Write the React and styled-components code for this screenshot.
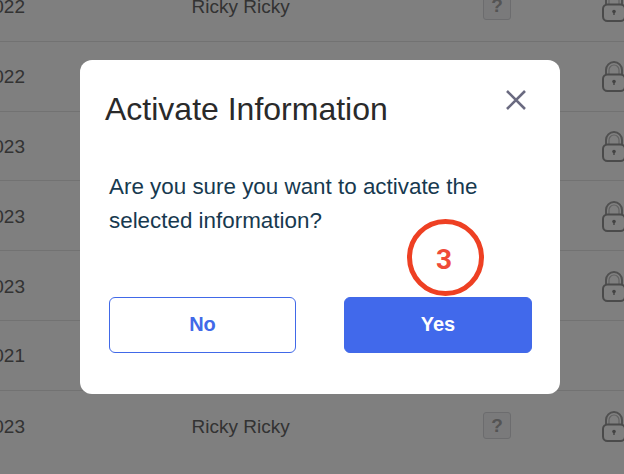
import React from "react";
import styled, { createGlobalStyle } from "styled-components";

const Global = createGlobalStyle`
  html, body { margin: 0; padding: 0; width: 624px; height: 474px; overflow: hidden; background: #fff; }
  body { font-family: "Liberation Sans", Arial, sans-serif; }
`;

const Page = styled.div`
  position: relative;
  width: 624px;
  height: 474px;
  overflow: hidden;
`;

const Table = styled.div`
  display: flex;
  flex-direction: column;
  margin-top: -28px;
`;

const Row = styled.div`
  display: grid;
  grid-template-columns: 192px 291px 119px 22px;
  align-items: center;
  height: 69.8px;
  box-sizing: border-box;
  border-bottom: 1px solid #e4e4e4;
  font-size: 19px;
  color: #666;
  &:last-child {
    border-bottom: none;
  }
`;

const DateCell = styled.div`
  display: flex;
  justify-content: flex-end;
  width: 25px;
  padding-top: 2px;
  white-space: nowrap;
`;

const NameCell = styled.div`
  margin-left: -0.5px;
  padding-top: 2px;
  white-space: nowrap;
`;

const HelpBadge = styled.div`
  width: 28px;
  height: 27px;
  box-sizing: border-box;
  border: 1.5px solid #d8d9dd;
  border-radius: 3px;
  background: #f4f4f6;
  color: #a8a8a8;
  font-size: 19px;
  font-weight: 700;
  display: flex;
  align-items: center;
  justify-content: center;
`;

const LockSvg = styled.svg`
  display: block;
  width: 24px;
  height: 32px;
  overflow: visible;
`;

const Overlay = styled.div`
  position: absolute;
  inset: 0;
  background: rgba(0, 0, 0, 0.5);
  box-sizing: border-box;
  padding: 60px 0 0 80px;
`;

const Modal = styled.div`
  width: 480px;
  height: 334px;
  box-sizing: border-box;
  background: #fff;
  border-radius: 12px;
  padding: 29px 28px 41px 29px;
  display: flex;
  flex-direction: column;
`;

const Header = styled.div`
  display: flex;
  align-items: center;
  justify-content: space-between;
  height: 40px;
`;

const Title = styled.h2`
  margin: 0 0 0 -4px;
  font-size: 32px;
  font-weight: 400;
  line-height: 40px;
  color: #2a2a2a;
`;

const Close = styled.svg`
  display: block;
  width: 22px;
  height: 20px;
  margin: -19px 5px 0 0;
`;

const Message = styled.p`
  margin: 41px 0 0;
  font-size: 22.4px;
  line-height: 34px;
  color: #17394f;
  white-space: nowrap;
`;

const Actions = styled.div`
  display: grid;
  grid-template-columns: 187px 188px;
  gap: 48px;
  margin-top: 59px;
`;

const Button = styled.button`
  height: 56px;
  box-sizing: border-box;
  border-radius: 6px;
  border: 1px solid #4169e8;
  background: ${(p) => (p.$primary ? "#4169eb" : "#fff")};
  color: ${(p) => (p.$primary ? "#fff" : "#4169e8")};
  font-family: inherit;
  font-size: 20px;
  font-weight: 700;
  padding: 0 0 2px;
`;

const Marker = styled.div`
  position: absolute;
  left: 406.5px;
  top: 218.5px;
  width: 77px;
  height: 77px;
  box-sizing: border-box;
  border: 5px solid #ee4023;
  border-radius: 50%;
  display: flex;
  align-items: center;
  justify-content: center;
  color: #ef4b38;
  font-family: Roboto, sans-serif;
  font-size: 28px;
  font-weight: 700;
  padding: 4px 2px 0 0;
`;

const Lock = () => (
  <LockSvg viewBox="0 0 24 32" fill="none">
    <path d="M4 15V10a8 8 0 0 1 16 0v5" stroke="#a0a0a0" strokeWidth="2" />
    <path d="M7 15V10a5 5 0 0 1 10 0v5" stroke="#c4c4c4" strokeWidth="1.2" />
    <rect x="1" y="14.5" width="22" height="16.5" rx="4.5" stroke="#949494" strokeWidth="2" />
    <circle cx="12" cy="21.5" r="1.8" fill="#888" />
    <path d="M12 22v3" stroke="#888" strokeWidth="1.4" />
  </LockSvg>
);

const rows = [
  { date: "2022", name: "Ricky Ricky", help: true, lock: true },
  { date: "2022", lock: true },
  { date: "2023", lock: true },
  { date: "2023", lock: true },
  { date: "2023", lock: true },
  { date: "2021" },
  { date: "2023", name: "Ricky Ricky", help: true, lock: true },
];

export default function App() {
  return (
    <Page>
      <Global />
      <Table>
        {rows.map((r, i) => (
          <Row key={i}>
            <DateCell>{r.date}</DateCell>
            <NameCell>{r.name}</NameCell>
            <div>{r.help && <HelpBadge>?</HelpBadge>}</div>
            <div>{r.lock && <Lock />}</div>
          </Row>
        ))}
      </Table>
      <Overlay>
        <Modal>
          <Header>
            <Title>Activate Information</Title>
            <Close viewBox="0 0 22 20" fill="none">
              <path d="M2 1l18 18M20 1L2 19" stroke="#6a6a80" strokeWidth="2.6" />
            </Close>
          </Header>
          <Message>
            Are you sure you want to activate the
            <br />
            selected information?
          </Message>
          <Actions>
            <Button>No</Button>
            <Button $primary>Yes</Button>
          </Actions>
        </Modal>
      </Overlay>
      <Marker>3</Marker>
    </Page>
  );
}
